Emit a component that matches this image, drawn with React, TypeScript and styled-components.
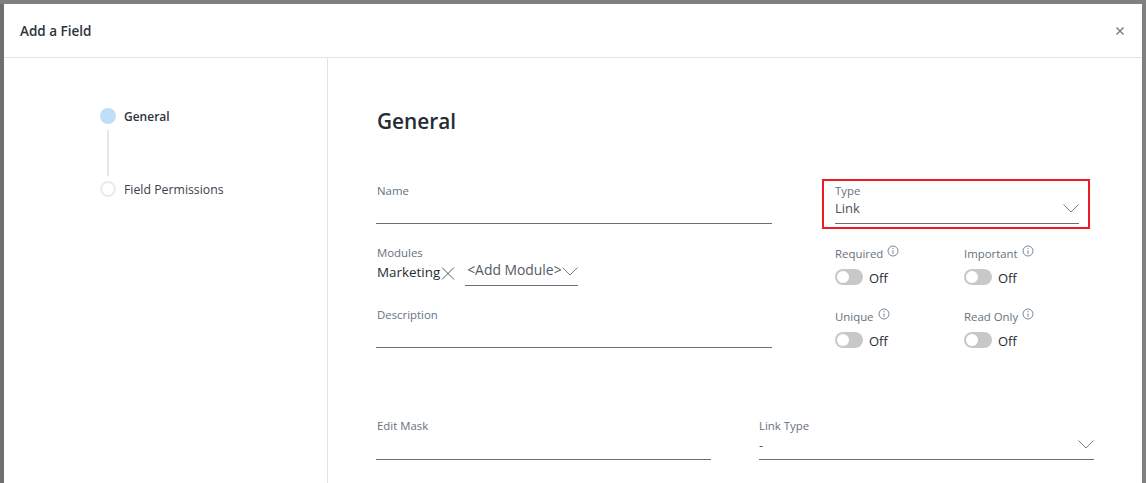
import React from "react";
import styled, { createGlobalStyle } from "styled-components";

const Global = createGlobalStyle`
  html, body { margin: 0; padding: 0; height: 100%; overflow: hidden; }
  body { background: #808080; font-family: "Open Sans", "Noto Sans", sans-serif; }
  * { box-sizing: border-box; }
`;

const Backdrop = styled.div`
  width: 1146px;
  height: 483px;
  background: #808080;
  padding: 4px 4px 0 4px;
  overflow: hidden;
`;

const Modal = styled.div`
  width: 1138px;
  height: 479px;
  background: #fff;
  box-shadow: -4px 0 0 #6f6f6f;
  display: flex;
  flex-direction: column;
`;

const Header = styled.header`
  height: 54px;
  flex: none;
  border-bottom: 1px solid #e3e3e3;
  padding: 0 18px 0 16px;
  display: flex;
  align-items: center;
  justify-content: space-between;
`;

const Title = styled.h2`
  margin: 0;
  font-size: 13.5px;
  font-weight: 600;
  color: #2d333b;
`;

const CloseIcon = styled.svg`
  width: 8px;
  height: 8px;
  stroke: #808080;
  stroke-width: 1.5;
  fill: none;
`;

const Body = styled.div`
  flex: 1;
  display: flex;
  min-height: 0;
`;

const Side = styled.nav`
  width: 324px;
  flex: none;
  border-right: 1px solid #e3e3e3;
  padding: 50px 0 0 96px;
`;

const Step = styled.div<{ $active?: boolean }>`
  display: flex;
  align-items: center;
  gap: 8px;
  height: 16px;
  font-size: ${(p) => (p.$active ? 12 : 12.3)}px;
  color: ${(p) => (p.$active ? "#2d333b" : "#3a424c")};
  font-weight: ${(p) => (p.$active ? 600 : 400)};
`;

const Dot = styled.span<{ $active?: boolean }>`
  width: 16px;
  height: 16px;
  border-radius: 50%;
  flex: none;
  background: ${(p) => (p.$active ? "#c0dff7" : "#fff")};
  border: ${(p) => (p.$active ? "none" : "2px solid #ebebeb")};
`;

const StepLine = styled.div`
  width: 2px;
  height: 46px;
  margin: 6px 0 5px 7px;
  background: #e6e6e6;
`;

const Main = styled.main`
  flex: 1;
  padding: 47px 0 0 48px;
  min-width: 0;
`;

const Heading = styled.h1`
  margin: 0 0 45px 1px;
  font-size: 20.8px;
  line-height: 32px;
  font-weight: 600;
  color: #252b33;
`;

const TopGrid = styled.div`
  display: grid;
  grid-template-columns: 396px 338px;
  column-gap: 50px;
`;

const LeftCol = styled.div`
  display: flex;
  flex-direction: column;
`;

const Field = styled.div<{ $h?: number }>`
  height: ${(p) => p.$h ?? 47}px;
  display: flex;
  flex-direction: column;
`;

const Label = styled.label<{ $flush?: boolean }>`
  margin: 1px 0 0 ${(p) => (p.$flush ? 0 : 1)}px;
  font-size: 11.4px;
  line-height: 16px;
  color: #66717e;
`;

const Underlined = styled.div<{ $h?: number; $pb?: number }>`
  height: ${(p) => p.$h ?? 25}px;
  padding-bottom: ${(p) => p.$pb ?? 0}px;
  border-bottom: 1px solid #6a6f75;
  display: flex;
  align-items: center;
  justify-content: space-between;
  font-size: 13px;
  color: #555c66;
`;

const ModuleRow = styled.div`
  display: flex;
  align-items: flex-start;
  height: 25px;
  padding-left: 1px;
`;

const Tag = styled.span`
  font-size: 13.4px;
  line-height: 20px;
  margin-top: 1px;
  color: #252b33;
`;

const TagX = styled.svg`
  width: 14px;
  height: 13px;
  margin: 6px 0 0 1px;
  stroke: #555c66;
  stroke-width: 1;
  fill: none;
`;

const AddModule = styled.div`
  width: 113px;
  height: 25px;
  margin-left: 10px;
  padding-left: 2px;
  border-bottom: 1px solid #6a6f75;
  display: flex;
  align-items: flex-start;
  font-size: 13.9px;
  line-height: 18px;
  color: #555c66;
  white-space: nowrap;
`;

const Chevron = styled.svg<{ $top?: number }>`
  width: 16px;
  height: 9px;
  flex: none;
  margin-top: ${(p) => p.$top ?? 0}px;
  margin-left: auto;
  stroke: #6e8194;
  stroke-width: 1;
  fill: none;
`;

const TypeBox = styled.div`
  width: 268px;
  height: 50px;
  margin-top: -3px;
  padding: 3px 9px 0 11px;
  border: 2px solid #ed1c24;
  display: flex;
  flex-direction: column;
`;

const TypeLabel = styled.label`
  font-size: 11.4px;
  line-height: 14px;
  color: #66717e;
`;

const TypeValue = styled.div`
  height: 26px;
  border-bottom: 1px solid #6a6f75;
  display: flex;
  align-items: center;
  justify-content: space-between;
  font-size: 13px;
  color: #4a515b;
  padding-bottom: 4px;
`;

const ValueText = styled.span`
  margin-bottom: 2px;
`;

const Toggles = styled.div`
  display: grid;
  grid-template-columns: 129px 129px;
  row-gap: 15px;
  margin: 17px 0 0 13px;
`;

const ToggleCell = styled.div`
  display: flex;
  flex-direction: column;
  height: 48px;
`;

const ToggleLabel = styled.div`
  display: flex;
  align-items: flex-start;
  gap: 4px;
  height: 21px;
  font-size: 11.4px;
  line-height: 16px;
  color: #66717e;
`;

const Info = styled.svg`
  width: 12px;
  height: 12px;
  margin-top: -1px;
  stroke: #7a8794;
  fill: none;
`;

const ToggleRow = styled.div`
  display: flex;
  align-items: center;
  gap: 6px;
  font-size: 13px;
  color: #252b33;
`;

const OffText = styled.span`
  padding-top: 2px;
`;

const Switch = styled.span`
  width: 28px;
  height: 16px;
  border-radius: 8px;
  background: #c8c8c8;
  padding: 2px;
  display: block;
`;

const Knob = styled.span`
  display: block;
  width: 12px;
  height: 12px;
  border-radius: 50%;
  background: #fff;
`;

const BottomGrid = styled.div`
  display: grid;
  grid-template-columns: 335px 335px;
  column-gap: 48px;
  margin-top: 49px;
`;

const ChevronIcon = ({ top }: { top?: number }) => (
  <Chevron $top={top} viewBox="0 0 16 9">
    <path d="M0.5 0.5 L8 8 L15.5 0.5" />
  </Chevron>
);

const InfoIcon = () => (
  <Info viewBox="0 0 12 12">
    <circle cx="6" cy="6" r="5" />
    <path d="M6 5.2 V9 M6 3 V4" />
  </Info>
);

const Toggle = ({ label }: { label: string }) => (
  <ToggleCell>
    <ToggleLabel>
      {label}
      <InfoIcon />
    </ToggleLabel>
    <ToggleRow>
      <Switch>
        <Knob />
      </Switch>
      <OffText>Off</OffText>
    </ToggleRow>
  </ToggleCell>
);

export default function App() {
  return (
    <>
      <Global />
      <Backdrop>
        <Modal>
          <Header>
            <Title>Add a Field</Title>
            <CloseIcon viewBox="0 0 8 8">
              <path d="M0.5 0.5 L7.5 7.5 M7.5 0.5 L0.5 7.5" />
            </CloseIcon>
          </Header>
          <Body>
            <Side>
              <Step $active>
                <Dot $active />
                General
              </Step>
              <StepLine />
              <Step>
                <Dot />
                Field Permissions
              </Step>
            </Side>
            <Main>
              <Heading>General</Heading>
              <TopGrid>
                <LeftCol>
                  <Field $h={62}>
                    <Label>Name</Label>
                    <Underlined />
                  </Field>
                  <Field $h={62}>
                    <Label>Modules</Label>
                    <ModuleRow>
                      <Tag>Marketing</Tag>
                      <TagX viewBox="0 0 14 13">
                        <path d="M1 0.5 L13 12.5 M13 0.5 L1 12.5" />
                      </TagX>
                      <AddModule>
                        &lt;Add Module&gt;
                        <ChevronIcon top={6} />
                      </AddModule>
                    </ModuleRow>
                  </Field>
                  <Field $h={62}>
                    <Label>Description</Label>
                    <Underlined />
                  </Field>
                </LeftCol>
                <div>
                  <TypeBox>
                    <TypeLabel>Type</TypeLabel>
                    <TypeValue>
                      <ValueText>Link</ValueText>
                      <ChevronIcon />
                    </TypeValue>
                  </TypeBox>
                  <Toggles>
                    <Toggle label="Required" />
                    <Toggle label="Important" />
                    <Toggle label="Unique" />
                    <Toggle label="Read Only" />
                  </Toggles>
                </div>
              </TopGrid>
              <BottomGrid>
                <Field $h={50}>
                  <Label>Edit Mask</Label>
                  <Underlined $h={26} />
                </Field>
                <Field $h={50}>
                  <Label $flush>Link Type</Label>
                  <Underlined $h={26} $pb={4}>
                    -
                    <ChevronIcon />
                  </Underlined>
                </Field>
              </BottomGrid>
            </Main>
          </Body>
        </Modal>
      </Backdrop>
    </>
  );
}
